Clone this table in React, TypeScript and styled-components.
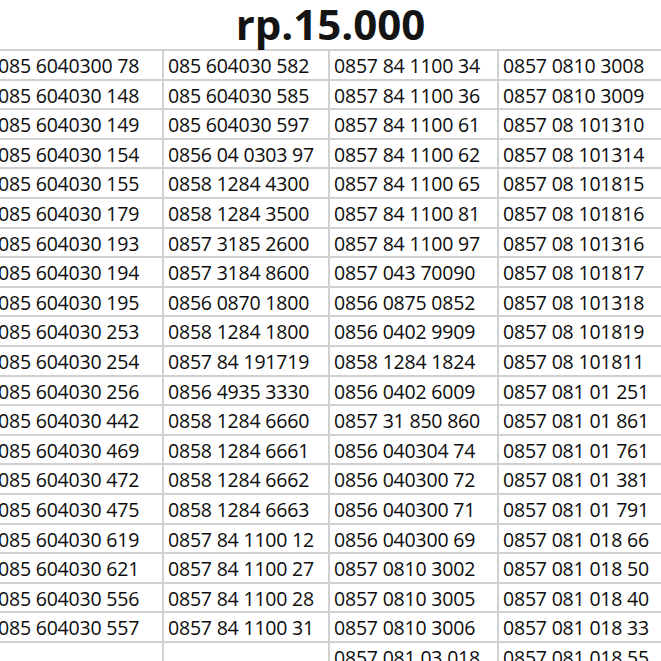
import styled, { createGlobalStyle } from 'styled-components';

const GlobalStyle = createGlobalStyle`
  html, body {
    margin: 0;
    padding: 0;
    background: #ffffff;
    overflow: hidden;
  }
`

const Page = styled.div`
  width: 661px;
  height: 661px;
  overflow: hidden;
  background: #ffffff;
  font-family: 'Open Sans', 'Noto Sans', sans-serif;
  color: #111111;
`

const Title = styled.h1`
  margin: 0;
  height: 49px;
  line-height: 47px;
  text-align: center;
  font-size: 42px;
  font-weight: 700;
  color: #141414;
`

const Sheet = styled.div`
  display: grid;
  grid-template-columns: 170px 166px 169px 166px;
  grid-auto-rows: 29.6px;
  margin-left: -6px;
  border-top: 2px solid #d0d0d0;
`

const Cell = styled.div`
  box-sizing: border-box;
  border-right: 2px solid #d0d0d0;
  border-bottom: 2px solid #d0d0d0;
  padding: 3px 0 0 4px;
  font-size: 19.5px;
  letter-spacing: -0.2px;
  line-height: 24px;
  color: #0c0c0c;
  white-space: nowrap;
  overflow: hidden;
`

const col1 = [
  '085 6040300 78', '085 604030 148', '085 604030 149', '085 604030 154',
  '085 604030 155', '085 604030 179', '085 604030 193', '085 604030 194',
  '085 604030 195', '085 604030 253', '085 604030 254', '085 604030 256',
  '085 604030 442', '085 604030 469', '085 604030 472', '085 604030 475',
  '085 604030 619', '085 604030 621', '085 604030 556', '085 604030 557', '',
];

const col2 = [
  '085 604030 582', '085 604030 585', '085 604030 597', '0856 04 0303 97',
  '0858 1284 4300', '0858 1284 3500', '0857 3185 2600', '0857 3184 8600',
  '0856 0870 1800', '0858 1284 1800', '0857 84 191719', '0856 4935 3330',
  '0858 1284 6660', '0858 1284 6661', '0858 1284 6662', '0858 1284 6663',
  '0857 84 1100 12', '0857 84 1100 27', '0857 84 1100 28', '0857 84 1100 31', '',
];

const col3 = [
  '0857 84 1100 34', '0857 84 1100 36', '0857 84 1100 61', '0857 84 1100 62',
  '0857 84 1100 65', '0857 84 1100 81', '0857 84 1100 97', '0857 043 70090',
  '0856 0875 0852', '0856 0402 9909', '0858 1284 1824', '0856 0402 6009',
  '0857 31 850 860', '0856 040304 74', '0856 040300 72', '0856 040300 71',
  '0856 040300 69', '0857 0810 3002', '0857 0810 3005', '0857 0810 3006',
  '0857 081 03 018',
];

const col4 = [
  '0857 0810 3008', '0857 0810 3009', '0857 08 101310', '0857 08 101314',
  '0857 08 101815', '0857 08 101816', '0857 08 101316', '0857 08 101817',
  '0857 08 101318', '0857 08 101819', '0857 08 101811', '0857 081 01 251',
  '0857 081 01 861', '0857 081 01 761', '0857 081 01 381', '0857 081 01 791',
  '0857 081 018 66', '0857 081 018 50', '0857 081 018 40', '0857 081 018 33',
  '0857 081 018 55',
];

function App() {
  const rows = col1.map((_, i) => [col1[i], col2[i], col3[i], col4[i]]);

  return (
    <Page>
      <GlobalStyle />
      <Title>rp.15.000</Title>
      <Sheet>
        {rows.map((row, i) =>
          row.map((num, j) => <Cell key={i + '-' + j}>{num}</Cell>)
        )}
      </Sheet>
    </Page>
  )
}

export default App;
